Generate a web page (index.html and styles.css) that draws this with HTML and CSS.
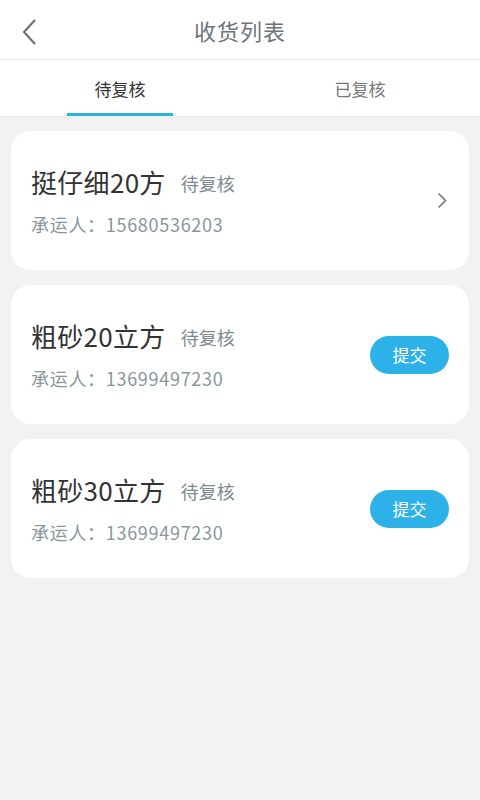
FILE: index.html
```html
<!DOCTYPE html>
<html lang="zh-CN">
<head>
  <meta charset="UTF-8">
  <meta name="viewport" content="width=device-width, initial-scale=1.0">
  <title>收货列表</title>
  <link rel="stylesheet" href="styles.css">
</head>
<body>
  <div class="header">
    <span class="back">
      <svg width="16" height="26" viewBox="0 0 16 26"><path d="M14 1 L3 13 L14 25" fill="none" stroke="#6b7478" stroke-width="2.2"/></svg>
    </span>
    <h1>收货列表</h1>
  </div>

  <div class="tabs">
    <div class="tab active">待复核</div>
    <div class="tab">已复核</div>
  </div>

  <div class="list">
    <div class="card">
      <div class="info">
        <div class="name">挺仔细20方<span class="status">待复核</span></div>
        <div class="carrier">承运人：15680536203</div>
      </div>
      <span class="arrow">
        <svg width="10" height="17" viewBox="0 0 10 17"><path d="M1.5 1.5 L8.5 8.5 L1.5 15.5" fill="none" stroke="#777" stroke-width="1.6"/></svg>
      </span>
    </div>

    <div class="card">
      <div class="info">
        <div class="name">粗砂20立方<span class="status">待复核</span></div>
        <div class="carrier">承运人：13699497230</div>
      </div>
      <button class="submit">提交</button>
    </div>

    <div class="card">
      <div class="info">
        <div class="name">粗砂30立方<span class="status">待复核</span></div>
        <div class="carrier">承运人：13699497230</div>
      </div>
      <button class="submit">提交</button>
    </div>
  </div>
</body>
</html>
```

FILE: styles.css
```css
body {
  margin: 0;
  font-family: "Noto Sans CJK SC", "Noto Sans", sans-serif;
  background-color: #f2f2f2;
  min-height: 800px;
}

.header {
  position: relative;
  height: 59px;
  background-color: #fff;
  border-bottom: 1px solid #e6e6e6;
  display: flex;
  align-items: center;
  justify-content: center;
}

.header h1 {
  margin: 0;
  font-size: 22px;
  font-weight: normal;
  color: #6b7478;
  letter-spacing: 1px;
}

.back {
  position: absolute;
  left: 21px;
  top: 19px;
  display: flex;
}

.tabs {
  display: flex;
  height: 56px;
  background-color: #fff;
  border-bottom: 1px solid #e9e9e9;
}

.tab {
  flex: 1;
  display: flex;
  align-items: center;
  justify-content: center;
  font-size: 17px;
  color: #777;
  position: relative;
}

.tab.active {
  color: #333;
}

.tab.active::after {
  content: "";
  position: absolute;
  left: 67px;
  right: 67px;
  bottom: 0;
  height: 3px;
  background-color: #2bb3e0;
}

.list {
  padding: 14px 11px;
  display: flex;
  flex-direction: column;
  gap: 15px;
}

.card {
  height: 139px;
  background-color: #fff;
  border-radius: 20px;
  display: flex;
  align-items: center;
  padding: 0 20px;
  box-sizing: border-box;
}

.info {
  flex: 1;
  padding-top: 1px;
}

.name {
  font-size: 26px;
  color: #333;
  line-height: 32px;
  letter-spacing: 0.3px;
}

.status {
  font-size: 18px;
  color: #7d8b90;
  margin-left: 15px;
  letter-spacing: 0;
  vertical-align: 2px;
}

.carrier {
  margin-top: 12px;
  font-size: 18px;
  color: #88979c;
  letter-spacing: 0.7px;
}

.arrow {
  display: flex;
  margin-right: 2px;
}

.submit {
  width: 79px;
  height: 38px;
  border: none;
  border-radius: 19px;
  background-color: #2cb1e9;
  color: #fff;
  font-family: inherit;
  font-size: 17px;
  padding: 0;
}
```
